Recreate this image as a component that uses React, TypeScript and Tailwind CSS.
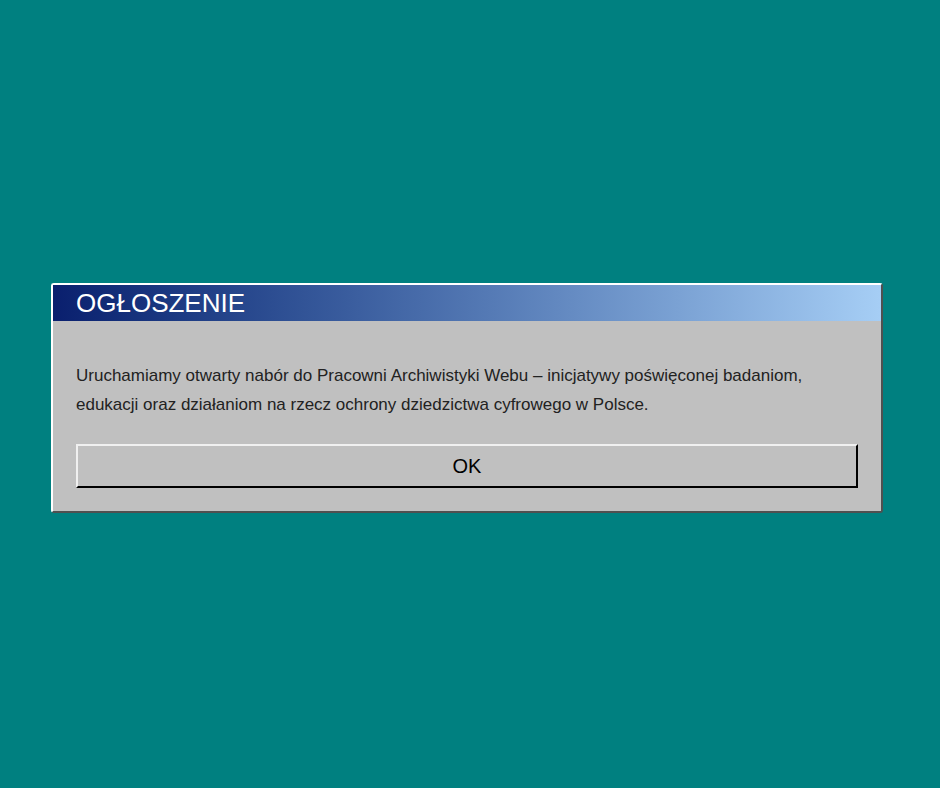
export default function App() {
  return (
    <div className="w-[940px] h-[788px] bg-[#008080] pt-[283px] pl-[51px]" style={{ fontFamily: '"Liberation Sans", Arial, sans-serif' }}>
      <div className="w-[832px] h-[230px] bg-[#c0c0c0] border-2 border-t-white border-l-white border-r-[#505050] border-b-[#505050] rounded-[3px]">
        <div className="h-[36px] bg-gradient-to-r from-[#0a1f6e] to-[#a6cef5] flex items-center pl-[23px] text-white text-[26px]">OGŁOSZENIE</div>
        <div className="px-[23px] pt-[40px] text-[17px] leading-[29px] text-[#222]">
          Uruchamiamy otwarty nabór do Pracowni Archiwistyki Webu – inicjatywy poświęconej badaniom, edukacji oraz działaniom na rzecz ochrony dziedzictwa cyfrowego w Polsce.
        </div>
        <div className="px-[23px] pt-[25px]">
          <div className="h-[44px] w-full border-2 border-t-[#f0f0f0] border-l-[#f0f0f0] border-r-black border-b-black flex items-center justify-center text-[20px] text-black">OK</div>
        </div>
      </div>
    </div>
  );
}
